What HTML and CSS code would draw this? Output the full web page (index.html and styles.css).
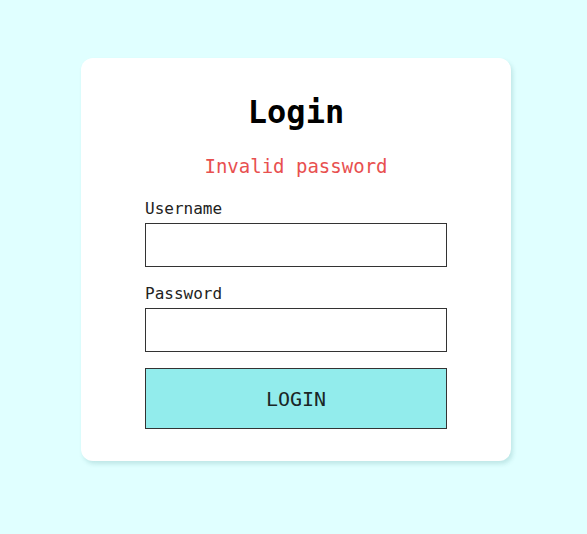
FILE: index.html
```html
<!DOCTYPE html>
<html lang="en">
<head>
<meta charset="utf-8">
<title>Login</title>
<link rel="stylesheet" href="styles.css">
</head>
<body>
<main class="page">
  <form class="card" onsubmit="return false">
    <h1 class="title">Login</h1>
    <p class="error">Invalid password</p>
    <label class="label" for="username">Username</label>
    <input class="field" id="username" type="text">
    <label class="label" for="password">Password</label>
    <input class="field" id="password" type="password">
    <button class="submit" type="submit">LOGIN</button>
  </form>
</main>
</body>
</html>
```
FILE: styles.css
```css
html, body {
  margin: 0;
  padding: 0;
  background: #e0ffff;
}
body {
  font-family: "DejaVu Sans Mono", "Liberation Mono", monospace;
  color: #111;
}
.page {
  display: flex;
  justify-content: center;
  align-items: flex-start;
  padding: 58px 0 0 5px;
  min-height: 534px;
  box-sizing: border-box;
}
.card {
  width: 430px;
  box-sizing: border-box;
  background: #ffffff;
  border-radius: 12px;
  box-shadow: 2px 3px 4px rgba(40, 120, 120, 0.18);
  padding: 34px 64px 32px 64px;
  display: flex;
  flex-direction: column;
}
.title {
  margin: 0;
  font-size: 32px;
  line-height: 40px;
  font-weight: bold;
  text-align: center;
  color: #000;
}
.error {
  margin: 22px 0 0 0;
  font-size: 19px;
  line-height: 24px;
  text-align: center;
  color: #e8504f;
}
.label {
  margin: 21px 0 4px 0;
  font-size: 16px;
  line-height: 20px;
  color: #222;
}
.field + .label {
  margin-top: 17px;
}
.field {
  display: block;
  width: 100%;
  height: 44px;
  box-sizing: border-box;
  margin: 0;
  border: 1px solid #333;
  border-radius: 0;
  background: #fff;
  font-family: inherit;
  font-size: 16px;
  padding: 0 8px;
  outline: none;
}
.submit {
  margin-top: 16px;
  width: 100%;
  height: 61px;
  box-sizing: border-box;
  border: 1px solid #333;
  border-radius: 0;
  background: #92ecec;
  font-family: inherit;
  font-size: 20px;
  color: #1a2626;
  padding: 0;
  cursor: pointer;
}
```
